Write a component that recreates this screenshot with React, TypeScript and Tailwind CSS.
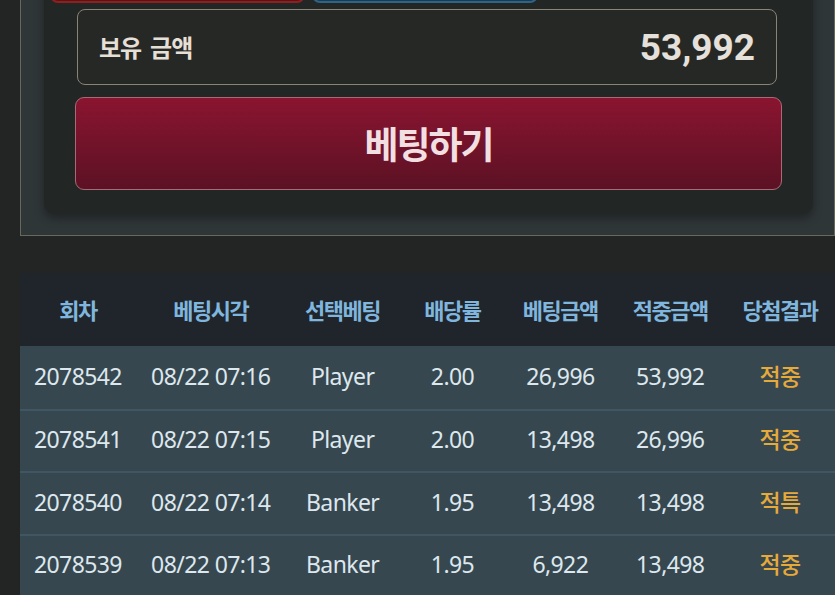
import React from 'react'

const cols = ['w-[116px]', 'w-[150px]', 'w-[114px]', 'w-[106px]', 'w-[110px]', 'w-[110px]', 'w-[110px]']

const headers = ['회차', '베팅시각', '선택베팅', '배당률', '베팅금액', '적중금액', '당첨결과']

const rows = [
  ['2078542', '08/22 07:16', 'Player', '2.00', '26,996', '53,992', '적중'],
  ['2078541', '08/22 07:15', 'Player', '2.00', '13,498', '26,996', '적중'],
  ['2078540', '08/22 07:14', 'Banker', '1.95', '13,498', '13,498', '적특'],
  ['2078539', '08/22 07:13', 'Banker', '1.95', '6,922', '13,498', '적중'],
]

export default function App() {
  return (
    <div
      className="w-[835px] h-[595px] overflow-hidden bg-[#232524]"
      style={{ fontFamily: '"Noto Sans", "Noto Sans CJK KR", sans-serif' }}
    >
      <div className="pl-[20px]">
        {/* bet panel */}
        <div className="w-[815px] bg-[#2f3638] border-b border-l border-r border-[#6a675c] pl-[23px] pr-[21px] pb-[21px]">
          <div className="bg-[#222726] rounded-b-[10px] shadow-[0_4px_10px_rgba(0,0,0,0.35)] px-[31px] pb-[24px]">
            <div className="flex gap-[7px] -mt-[37px] ml-[-25px]">
              <div className="w-[255px] h-[40px] rounded-[8px] bg-[#5a1418] border-2 border-[#8e2020]" />
              <div className="w-[226px] h-[40px] rounded-[8px] bg-[#1c3a50] border-2 border-[#2f6488]" />
            </div>
            <div className="mt-[6px] ml-[2px] mr-[5px] h-[76px] rounded-[8px] border border-[#8a8378] bg-[#262826] flex items-center justify-between pl-[21px] pr-[21px]">
              <span
                className="text-[24px] font-bold text-[#e6dfd6] tracking-[-1px]"
                style={{ fontFamily: '"Noto Sans CJK KR", sans-serif' }}
              >
                보유&nbsp;&nbsp;금액
              </span>
              <span
                className="text-[37px] font-bold text-[#e6e0da] leading-none"
                style={{ fontFamily: 'Roboto, sans-serif' }}
              >
                53,992
              </span>
            </div>
            <button className="mt-[12px] w-full h-[93px] rounded-[9px] border border-[#a86a74] bg-gradient-to-b from-[#8a1430] to-[#5c1124] flex items-center justify-center">
              <span
                className="text-[37px] font-bold text-[#f2dfe2] tracking-[-2px]"
                style={{ fontFamily: '"Noto Sans CJK KR", sans-serif' }}
              >
                베팅하기
              </span>
            </button>
          </div>
        </div>

        {/* history table */}
        <div className="mt-[37px] w-[815px]">
          <div className="flex h-[73px] items-center bg-[#1f252b]">
            {headers.map((h, i) => (
              <div
                key={h}
                className={`${cols[i]} text-center text-[22px] font-bold text-[#80b6de] tracking-[-1.5px]`}
                style={{ fontFamily: '"Noto Sans CJK KR", sans-serif' }}
              >
                {h}
              </div>
            ))}
          </div>
          {rows.map((r, ri) => (
            <div
              key={r[0]}
              className={`flex h-[62.5px] items-center pb-[3px] bg-[#37474f] ${ri > 0 ? 'border-t-2 border-[#405662]' : ''}`}
            >
              {r.map((c, i) => (
                <div
                  key={i}
                  className={`${cols[i]} text-center text-[23px] tracking-[-0.6px] ${
                    i === 6 ? 'text-[#e6aa3a] font-medium' : 'text-[#dde7ee]'
                  }`}
                >
                  {c}
                </div>
              ))}
            </div>
          ))}
        </div>
      </div>
    </div>
  )
}
